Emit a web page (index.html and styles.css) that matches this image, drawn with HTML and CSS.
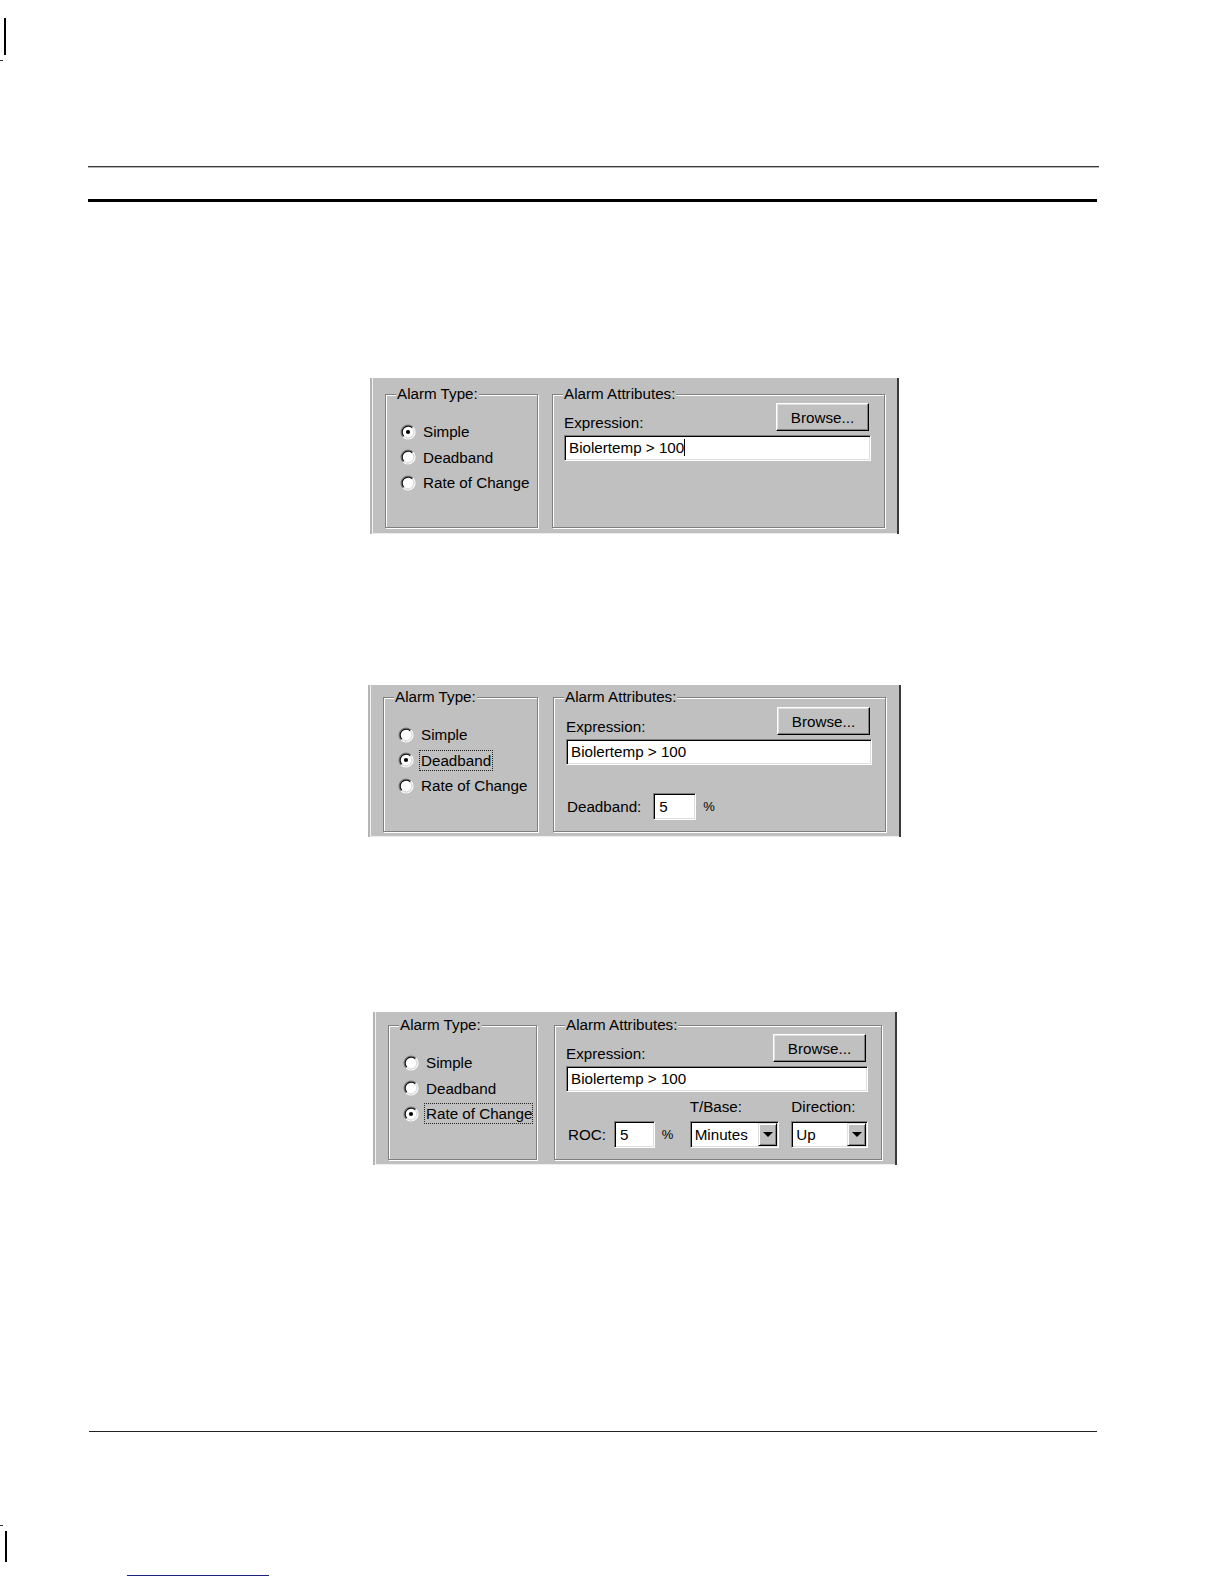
FILE: index.html
```html
<!DOCTYPE html>
<html>
<head>
<meta charset="utf-8">
<title>Alarm Type</title>
<link rel="stylesheet" href="styles.css">
</head>
<body>
<div class="page">
  <div class="crop crop-top"></div>
  <div class="tick tick-top"></div>
  <div class="rule rule-thin"></div>
  <div class="rule rule-thick"></div>

  <!-- Dialog 1: Simple -->
  <div class="dialog dialog-1">
    <div class="group group-type">
      <span class="group-label">Alarm Type:</span>
      <ul class="radios">
        <li class="radio"><svg class="radio-icon" viewBox="0 0 16 16" width="16" height="16"><circle cx="8" cy="8" r="6" fill="#fff"/><path d="M3.05 12.95A7 7 0 0 1 12.95 3.05" fill="none" stroke="#808080" stroke-width="1.2"/><path d="M12.95 3.05A7 7 0 0 1 3.05 12.95" fill="none" stroke="#fff" stroke-width="1.2"/><path d="M3.76 12.24A6 6 0 0 1 12.24 3.76" fill="none" stroke="#101010" stroke-width="1.2"/><path d="M12.24 3.76A6 6 0 0 1 3.76 12.24" fill="none" stroke="#dcdcdc" stroke-width="1.2"/><circle cx="8" cy="8" r="2.1" fill="#000"/></svg><span>Simple</span></li>
        <li class="radio"><svg class="radio-icon" viewBox="0 0 16 16" width="16" height="16"><circle cx="8" cy="8" r="6" fill="#fff"/><path d="M3.05 12.95A7 7 0 0 1 12.95 3.05" fill="none" stroke="#808080" stroke-width="1.2"/><path d="M12.95 3.05A7 7 0 0 1 3.05 12.95" fill="none" stroke="#fff" stroke-width="1.2"/><path d="M3.76 12.24A6 6 0 0 1 12.24 3.76" fill="none" stroke="#101010" stroke-width="1.2"/><path d="M12.24 3.76A6 6 0 0 1 3.76 12.24" fill="none" stroke="#dcdcdc" stroke-width="1.2"/></svg><span>Deadband</span></li>
        <li class="radio"><svg class="radio-icon" viewBox="0 0 16 16" width="16" height="16"><circle cx="8" cy="8" r="6" fill="#fff"/><path d="M3.05 12.95A7 7 0 0 1 12.95 3.05" fill="none" stroke="#808080" stroke-width="1.2"/><path d="M12.95 3.05A7 7 0 0 1 3.05 12.95" fill="none" stroke="#fff" stroke-width="1.2"/><path d="M3.76 12.24A6 6 0 0 1 12.24 3.76" fill="none" stroke="#101010" stroke-width="1.2"/><path d="M12.24 3.76A6 6 0 0 1 3.76 12.24" fill="none" stroke="#dcdcdc" stroke-width="1.2"/></svg><span>Rate of Change</span></li>
      </ul>
    </div>
    <div class="group group-attr">
      <span class="group-label">Alarm Attributes:</span>
      <div class="attr-head">
        <span class="field-label">Expression:</span>
        <button class="btn" type="button">Browse...</button>
      </div>
      <div class="textbox expr">Biolertemp &gt; 100<span class="caret"></span></div>
    </div>
  </div>

  <!-- Dialog 2: Deadband -->
  <div class="dialog dialog-2">
    <div class="group group-type">
      <span class="group-label">Alarm Type:</span>
      <ul class="radios">
        <li class="radio"><svg class="radio-icon" viewBox="0 0 16 16" width="16" height="16"><circle cx="8" cy="8" r="6" fill="#fff"/><path d="M3.05 12.95A7 7 0 0 1 12.95 3.05" fill="none" stroke="#808080" stroke-width="1.2"/><path d="M12.95 3.05A7 7 0 0 1 3.05 12.95" fill="none" stroke="#fff" stroke-width="1.2"/><path d="M3.76 12.24A6 6 0 0 1 12.24 3.76" fill="none" stroke="#101010" stroke-width="1.2"/><path d="M12.24 3.76A6 6 0 0 1 3.76 12.24" fill="none" stroke="#dcdcdc" stroke-width="1.2"/></svg><span>Simple</span></li>
        <li class="radio"><svg class="radio-icon" viewBox="0 0 16 16" width="16" height="16"><circle cx="8" cy="8" r="6" fill="#fff"/><path d="M3.05 12.95A7 7 0 0 1 12.95 3.05" fill="none" stroke="#808080" stroke-width="1.2"/><path d="M12.95 3.05A7 7 0 0 1 3.05 12.95" fill="none" stroke="#fff" stroke-width="1.2"/><path d="M3.76 12.24A6 6 0 0 1 12.24 3.76" fill="none" stroke="#101010" stroke-width="1.2"/><path d="M12.24 3.76A6 6 0 0 1 3.76 12.24" fill="none" stroke="#dcdcdc" stroke-width="1.2"/><circle cx="8" cy="8" r="2.1" fill="#000"/></svg><span class="focus">Deadband</span></li>
        <li class="radio"><svg class="radio-icon" viewBox="0 0 16 16" width="16" height="16"><circle cx="8" cy="8" r="6" fill="#fff"/><path d="M3.05 12.95A7 7 0 0 1 12.95 3.05" fill="none" stroke="#808080" stroke-width="1.2"/><path d="M12.95 3.05A7 7 0 0 1 3.05 12.95" fill="none" stroke="#fff" stroke-width="1.2"/><path d="M3.76 12.24A6 6 0 0 1 12.24 3.76" fill="none" stroke="#101010" stroke-width="1.2"/><path d="M12.24 3.76A6 6 0 0 1 3.76 12.24" fill="none" stroke="#dcdcdc" stroke-width="1.2"/></svg><span>Rate of Change</span></li>
      </ul>
    </div>
    <div class="group group-attr">
      <span class="group-label">Alarm Attributes:</span>
      <div class="attr-head">
        <span class="field-label">Expression:</span>
        <button class="btn" type="button">Browse...</button>
      </div>
      <div class="textbox expr">Biolertemp &gt; 100</div>
      <div class="param-row">
        <span class="field-label db-label">Deadband:</span>
        <div class="textbox small db-input">5</div>
        <span class="pct">%</span>
      </div>
    </div>
  </div>

  <!-- Dialog 3: Rate of Change -->
  <div class="dialog dialog-3">
    <div class="group group-type">
      <span class="group-label">Alarm Type:</span>
      <ul class="radios">
        <li class="radio"><svg class="radio-icon" viewBox="0 0 16 16" width="16" height="16"><circle cx="8" cy="8" r="6" fill="#fff"/><path d="M3.05 12.95A7 7 0 0 1 12.95 3.05" fill="none" stroke="#808080" stroke-width="1.2"/><path d="M12.95 3.05A7 7 0 0 1 3.05 12.95" fill="none" stroke="#fff" stroke-width="1.2"/><path d="M3.76 12.24A6 6 0 0 1 12.24 3.76" fill="none" stroke="#101010" stroke-width="1.2"/><path d="M12.24 3.76A6 6 0 0 1 3.76 12.24" fill="none" stroke="#dcdcdc" stroke-width="1.2"/></svg><span>Simple</span></li>
        <li class="radio"><svg class="radio-icon" viewBox="0 0 16 16" width="16" height="16"><circle cx="8" cy="8" r="6" fill="#fff"/><path d="M3.05 12.95A7 7 0 0 1 12.95 3.05" fill="none" stroke="#808080" stroke-width="1.2"/><path d="M12.95 3.05A7 7 0 0 1 3.05 12.95" fill="none" stroke="#fff" stroke-width="1.2"/><path d="M3.76 12.24A6 6 0 0 1 12.24 3.76" fill="none" stroke="#101010" stroke-width="1.2"/><path d="M12.24 3.76A6 6 0 0 1 3.76 12.24" fill="none" stroke="#dcdcdc" stroke-width="1.2"/></svg><span>Deadband</span></li>
        <li class="radio"><svg class="radio-icon" viewBox="0 0 16 16" width="16" height="16"><circle cx="8" cy="8" r="6" fill="#fff"/><path d="M3.05 12.95A7 7 0 0 1 12.95 3.05" fill="none" stroke="#808080" stroke-width="1.2"/><path d="M12.95 3.05A7 7 0 0 1 3.05 12.95" fill="none" stroke="#fff" stroke-width="1.2"/><path d="M3.76 12.24A6 6 0 0 1 12.24 3.76" fill="none" stroke="#101010" stroke-width="1.2"/><path d="M12.24 3.76A6 6 0 0 1 3.76 12.24" fill="none" stroke="#dcdcdc" stroke-width="1.2"/><circle cx="8" cy="8" r="2.1" fill="#000"/></svg><span class="focus clip">Rate of Change</span></li>
      </ul>
    </div>
    <div class="group group-attr">
      <span class="group-label">Alarm Attributes:</span>
      <div class="attr-head">
        <span class="field-label">Expression:</span>
        <button class="btn" type="button">Browse...</button>
      </div>
      <div class="textbox expr">Biolertemp &gt; 100</div>
      <div class="roc-row">
        <span class="field-label roc-label">ROC:</span>
        <div class="textbox small roc-input">5</div>
        <span class="pct pct-roc">%</span>
        <div class="col col-tbase">
          <span class="field-label">T/Base:</span>
          <div class="combo"><span class="combo-text">Minutes</span><span class="drop"><span class="arrow"></span></span></div>
        </div>
        <div class="col col-dir">
          <span class="field-label">Direction:</span>
          <div class="combo"><span class="combo-text">Up</span><span class="drop"><span class="arrow"></span></span></div>
        </div>
      </div>
    </div>
  </div>

  <div class="rule rule-bottom"></div>
  <div class="tick tick-bottom"></div>
  <div class="crop crop-bottom"></div>
  <div class="link-line"></div>
</div>
</body>
</html>
```

FILE: styles.css
```css
* {
  box-sizing: border-box;
}

body {
  margin: 0;
  background: #ffffff;
  font-family: "Liberation Sans", Arial, sans-serif;
}

.page {
  width: 1224px;
  height: 1584px;
  overflow: hidden;
  display: flow-root;
}

/* crop marks and rules */
.crop {
  width: 2px;
  background: #000;
  margin-left: 4px;
}

.crop-top {
  margin-top: 18px;
  height: 37px;
}

.crop-bottom {
  margin-top: 5px;
  height: 31px;
  margin-left: 5px;
}

.tick {
  width: 3px;
  height: 1px;
  background: #333;
}

.tick-top {
  margin-top: 5px;
}

.tick-bottom {
  margin-top: 93px;
}

.rule-thin {
  margin-top: 105px;
  margin-left: 88px;
  width: 1011px;
  height: 2px;
  border-top: 1px solid #3a3a3a;
  border-bottom: 1px solid #b5b5b5;
}

.rule-thick {
  margin-top: 31px;
  margin-left: 88px;
  width: 1009px;
  height: 3px;
  background: #000;
}

.rule-bottom {
  margin-top: 266px;
  margin-left: 89px;
  width: 1008px;
  height: 1px;
  background: #222;
}

.link-line {
  margin-top: 13px;
  margin-left: 127px;
  width: 142px;
  height: 1px;
  background: #1c2280;
}

/* dialogs */
.dialog {
  display: flex;
  align-items: flex-start;
  background: #c0c0c0;
  color: #000;
  font-size: 15.2px;
  padding-left: 15px;
  box-shadow: inset 2px 0 0 #b4b4b4, inset 3px 0 0 #f2f2f2, inset -2px 0 0 #3a3a3a, inset 0 -1px 0 #ececec;
}

.dialog-1 {
  margin-top: 176px;
  margin-left: 370px;
  width: 529px;
  height: 156px;
  padding-top: 16px;
  gap: 14px;
}

.dialog-1 .group-type { width: 153px; height: 134px; }
.dialog-1 .group-attr { width: 333px; height: 134px; }

.dialog-2 {
  margin-top: 151px;
  margin-left: 368px;
  width: 533px;
  height: 152px;
  padding-top: 12px;
  gap: 15px;
}

.dialog-2 .group-type { width: 155px; height: 135px; }
.dialog-2 .group-attr { width: 333px; height: 135px; padding-top: 9px; padding-left: 12px; }

.dialog-3 {
  margin-top: 175px;
  margin-left: 373px;
  width: 524px;
  height: 153px;
  padding-top: 13px;
  gap: 17px;
}

.dialog-3 .group-type { width: 149px; height: 135px; }
.dialog-3 .group-attr { width: 328px; height: 135px; }

/* etched group box */
.group {
  position: relative;
  border: 1px solid #808080;
  box-shadow: inset 1px 1px 0 #ffffff, 1px 1px 0 #ffffff;
}

.group-label {
  position: absolute;
  top: -9px;
  left: 10px;
  line-height: 16px;
  padding: 0 1px;
  background: #c0c0c0;
  white-space: nowrap;
}

/* radios */
.radios {
  list-style: none;
  margin: 0;
  padding: 24px 0 0 14px;
}

.radio {
  display: flex;
  align-items: center;
  height: 25.6px;
  white-space: nowrap;
}

.radio-icon {
  flex: none;
  margin-right: 7px;
}

.focus {
  display: inline-block;
  line-height: 19px;
  border: 1px dotted #222;
  padding: 0 1px 0 1px;
  margin-left: -2px;
}

.focus.clip {
  width: 109px;
  overflow: hidden;
}

/* attributes */
.group-attr {
  padding: 8px 13px 0 11px;
}

.attr-head {
  display: flex;
  justify-content: space-between;
  align-items: flex-end;
  height: 28px;
}

.field-label {
  line-height: 16px;
  white-space: nowrap;
}

.btn {
  width: 93px;
  height: 28px;
  margin: 0 2px 0 0;
  padding: 0;
  font: inherit;
  color: #000;
  background: #c0c0c0;
  border: 1px solid;
  border-color: #ffffff #000000 #000000 #ffffff;
  box-shadow: inset -1px -1px 0 #808080, inset 1px 1px 0 #dfdfdf;
}

.textbox {
  height: 26px;
  background: #ffffff;
  border: 1px solid;
  border-color: #808080 #ffffff #ffffff #808080;
  box-shadow: inset 1px 1px 0 #000000, inset -1px -1px 0 #dfdfdf;
  padding-left: 4px;
  line-height: 24px;
  white-space: nowrap;
}

.expr {
  margin-top: 4px;
}

.caret {
  display: inline-block;
  width: 1px;
  height: 17px;
  background: #000;
  vertical-align: -3px;
}

.param-row {
  display: flex;
  align-items: center;
  margin-top: 28px;
  height: 27px;
}

.db-label {
  margin-left: 1px;
}

.small {
  height: 27px;
  line-height: 25px;
  padding-left: 5px;
}

.db-input {
  width: 43px;
  margin-left: 12px;
}

.pct {
  font-size: 13px;
  margin-left: 7px;
}

/* ROC row */
.roc-row {
  display: flex;
  align-items: flex-end;
  margin-top: 7px;
}

.roc-label {
  line-height: 27px;
  margin-left: 2px;
}

.roc-input {
  width: 41px;
  margin-left: 8px;
}

.pct-roc {
  width: 28px;
  line-height: 27px;
}

.col {
  display: flex;
  flex-direction: column;
  gap: 6px;
}

.col-tbase {
  width: 90px;
}

.col-dir {
  width: 77px;
  margin-left: 12px;
}

.combo {
  display: flex;
  height: 27px;
  background: #ffffff;
  border: 1px solid;
  border-color: #808080 #ffffff #ffffff #808080;
  box-shadow: inset 1px 1px 0 #000000, inset -1px -1px 0 #dfdfdf;
  padding: 1px;
}

.combo-text {
  flex: 1;
  padding-left: 3px;
  line-height: 23px;
  white-space: nowrap;
}

.drop {
  flex: none;
  width: 19px;
  display: flex;
  align-items: center;
  justify-content: center;
  background: #c0c0c0;
  border: 1px solid;
  border-color: #dfdfdf #000000 #000000 #dfdfdf;
  box-shadow: inset 1px 1px 0 #ffffff, inset -1px -1px 0 #808080;
}

.arrow {
  width: 0;
  height: 0;
  border-left: 5px solid transparent;
  border-right: 5px solid transparent;
  border-top: 5px solid #000;
}
```
